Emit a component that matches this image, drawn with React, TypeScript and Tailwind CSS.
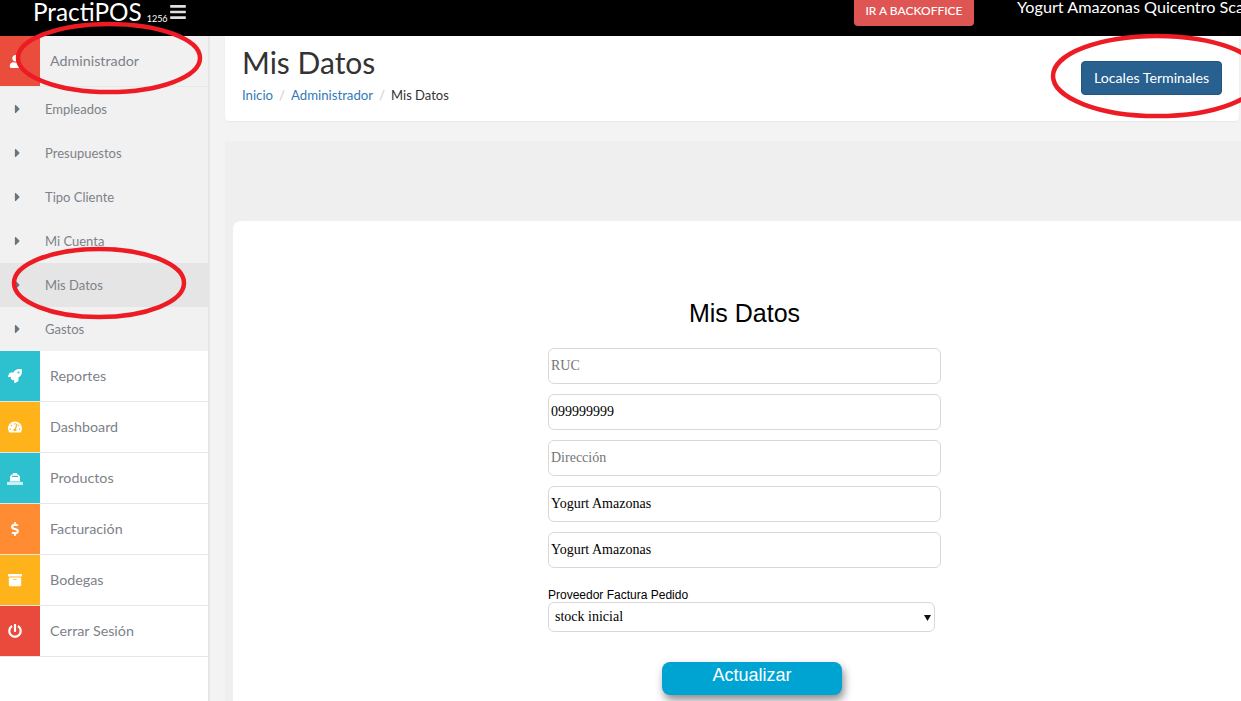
import React from "react";
import { FaUser, FaRocket, FaTachometerAlt, FaDollarSign, FaArchive, FaPowerOff, FaCaretRight, FaBars } from "react-icons/fa";

const ShipIcon = () => (
  <svg viewBox="0 0 16 13" width="16" height="13" fill="#fff">
    <path d="M3 9V5.500C3 3.500 4.500 2.600 6 2.300V1h4v1.300c1.500.3 3 1.200 3 3.200V9l1 .5H2z" />
    <rect x="5" y="3.800" width="6" height="1.200" fill="#2dc0ce" />
    <rect x="0" y="10" width="16" height="3" opacity="0.75" />
  </svg>
);

const subs = ["Empleados", "Presupuestos", "Tipo Cliente", "Mi Cuenta", "Mis Datos", "Gastos"];
const menus = [
  { label: "Reportes", bg: "bg-[#2dc0ce]", icon: <FaRocket /> },
  { label: "Dashboard", bg: "bg-[#ffb31a]", icon: <FaTachometerAlt /> },
  { label: "Productos", bg: "bg-[#2dc0ce]", icon: <ShipIcon /> },
  { label: "Facturación", bg: "bg-[#ff8c33]", icon: <FaDollarSign /> },
  { label: "Bodegas", bg: "bg-[#ffb31a]", icon: <FaArchive /> },
  { label: "Cerrar Sesión", bg: "bg-[#ea4a3c]", icon: <FaPowerOff /> },
];

const field = "h-9 w-full rounded-md border border-[#d8d8d8] bg-white px-[2px] text-[14px] text-black outline-none placeholder:text-[#757575] font-['Liberation_Serif',serif]";

export default function App() {
  return (
    <div className="relative flex h-[701px] w-[1241px] flex-col overflow-hidden bg-[#f3f3f3] font-['Lato',sans-serif]">
      <header className="flex h-9 shrink-0 overflow-hidden bg-black text-white">
        <div className="flex w-[854px] shrink-0 items-start pl-[33px]">
          <span className="text-[24.3px] leading-[24px]">PractiPOS</span>
          <span className="ml-[5px] mt-[13px] text-[9px] leading-[12px]">1256</span>
          <FaBars className="ml-[1px] mt-[3px] text-[18px] text-[#e0e0e0]" />
        </div>
        <button className="mt-[-5px] h-[31px] w-[120px] shrink-0 rounded bg-[#de5554] text-[12px] font-medium text-white">IR A BACKOFFICE</button>
        <div className="ml-[43px] shrink-0 whitespace-nowrap text-[16.2px] leading-[14px]">Yogurt Amazonas Quicentro Scala</div>
      </header>
      <div className="flex min-h-0 flex-1">
        <aside className="w-[210px] shrink-0 border-r-2 border-[#e6e6e6] bg-white">
          <div className="flex h-[51px] border-b border-[#e8e8e8] bg-[#f1f1f1]">
            <div className="flex w-10 items-center justify-center bg-[#ea4d3c] pr-[10px] text-[13px] text-white"><FaUser /></div>
            <span className="ml-[10px] self-center text-[14.3px] text-[#7d8288]">Administrador</span>
          </div>
          {subs.map((s) => (
            <div key={s} className={`flex h-11 items-center pl-[14px] ${s === "Mis Datos" ? "bg-[#e5e5e5]" : "bg-[#f1f1f1]"}`}>
              <FaCaretRight className="w-[7px] text-[14px] text-[#66757f]" />
              <span className="ml-[24px] mt-[2px] text-[13px] text-[#7d8288]">{s}</span>
            </div>
          ))}
          {menus.map(({ label, bg, icon }) => (
            <div key={label} className="flex h-[51px] border-b border-[#e6e6e6] bg-white">
              <div className={`flex w-10 items-center justify-center pr-[10px] text-[14px] text-white ${bg}`}>{icon}</div>
              <span className="ml-[10px] self-center text-[14.3px] text-[#7d8288]">{label}</span>
            </div>
          ))}
        </aside>
        <main className="min-w-0 flex-1 pl-[15px]">
          <div className="mr-[2px] flex h-[85px] items-start justify-between rounded-b bg-white pl-[17px] pr-[17px] shadow-[0_1px_2px_rgba(0,0,0,0.05)]">
            <div>
              <h1 className="mt-[8px] text-[30px] leading-[36px] text-[#333]">Mis Datos</h1>
              <nav className="mt-[5px] flex text-[13.2px] leading-[20px]">
                <span className="text-[#337ab7]">Inicio</span>
                <span className="mx-[6px] text-[#ccc]">/</span>
                <span className="text-[#337ab7]">Administrador</span>
                <span className="mx-[6px] text-[#ccc]">/</span>
                <span className="text-[13px] text-[#333]">Mis Datos</span>
              </nav>
            </div>
            <button className="mt-[25px] h-[34px] w-[141px] rounded border border-[#245580] bg-[#286090] text-[14.2px] text-white">Locales Terminales</button>
          </div>
          <div className="mt-5 h-[560px] bg-[#efefef] pt-20 pl-2">
            <section className="flex h-[480px] flex-col rounded-tl-lg bg-white pl-[315px]">
              <h2 className="mt-[77px] w-[393px] text-center font-['Liberation_Sans',sans-serif] text-[25px] leading-[30px] text-black">Mis Datos</h2>
              <div className="mt-[20px] flex w-[393px] flex-col gap-[10px]">
                <input className={field} placeholder="RUC" />
                <input className={field} defaultValue="099999999" />
                <input className={field} placeholder="Dirección" />
                <input className={field} defaultValue="Yogurt Amazonas" />
                <input className={field} defaultValue="Yogurt Amazonas" />
              </div>
              <label className="mt-[20px] font-['Liberation_Sans',sans-serif] text-[12px] leading-[14px] text-black">Proveedor Factura Pedido</label>
              <div className="relative w-[387px]">
                <select defaultValue="stock inicial" className="h-[30px] w-full appearance-none rounded-md border border-[#d8d8d8] bg-white pb-[2px] pl-[6px] font-['Liberation_Serif',serif] text-[14px] text-black outline-none">
                  <option>stock inicial</option>
                </select>
                <svg viewBox="0 0 8 8" className="pointer-events-none absolute right-[4px] top-[12px] h-[7px] w-[7px]"><path d="M0 1h8L4 8z" fill="#111" /></svg>
              </div>
              <button className="ml-[114px] mt-[30px] h-[33px] w-[180px] rounded-lg bg-[#00a4d3] pb-[7px] font-['Liberation_Sans',sans-serif] text-[18px] text-white shadow-[2px_5px_8px_rgba(0,0,0,0.45)]">Actualizar</button>
            </section>
          </div>
        </main>
      </div>
      <svg className="pointer-events-none absolute inset-0" width="1241" height="701" fill="none" stroke="#ed1c24" strokeWidth="4.5">
        <ellipse cx="109" cy="58" rx="91" ry="34" />
        <ellipse cx="99" cy="283" rx="85" ry="34" />
        <ellipse cx="1157" cy="76" rx="104" ry="40" />
      </svg>
    </div>
  );
}
